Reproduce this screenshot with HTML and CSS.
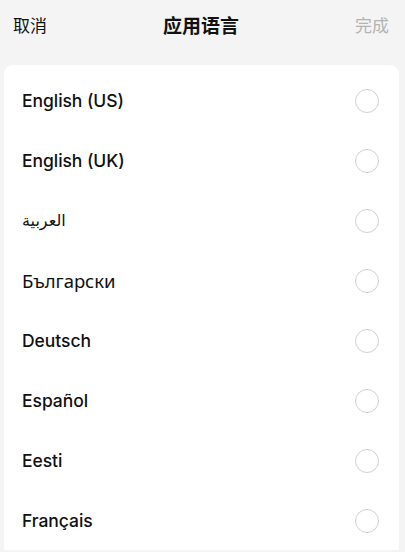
FILE: index.html
```html
<!DOCTYPE html>
<html>
<head>
<meta charset="utf-8">
<link rel="stylesheet" href="styles.css">
</head>
<body>
<div class="header">
  <span class="cancel">取消</span>
  <span class="title">应用语言</span>
  <span class="done">完成</span>
</div>
<div class="card">
  <div class="row"><span class="name">English (US)</span><span class="radio"></span></div>
  <div class="row"><span class="name">English (UK)</span><span class="radio"></span></div>
  <div class="row"><span class="name light" lang="ar">العربية</span><span class="radio"></span></div>
  <div class="row"><span class="name regular">Български</span><span class="radio"></span></div>
  <div class="row"><span class="name">Deutsch</span><span class="radio"></span></div>
  <div class="row"><span class="name">Español</span><span class="radio"></span></div>
  <div class="row"><span class="name">Eesti</span><span class="radio"></span></div>
  <div class="row"><span class="name">Français</span><span class="radio"></span></div>
</div>
</body>
</html>
```
FILE: styles.css
```css
html, body {
  margin: 0;
  padding: 0;
  background: #f4f4f4;
  height: 552px;
  overflow: hidden;
}
body {
  font-family: Inter, "Noto Sans CJK SC", sans-serif;
  color: #111;
}
.header {
  height: 48px;
  display: flex;
  align-items: center;
  justify-content: space-between;
  padding: 0 16px 0 13px;
  margin-bottom: 17px;
}
.cancel, .done {
  font-family: "Noto Sans CJK SC", sans-serif;
  font-size: 17px;
  width: 60px;
}
.done {
  color: #b3b3b3;
  text-align: right;
}
.title {
  font-family: "Noto Sans CJK SC", sans-serif;
  font-size: 19px;
  font-weight: 700;
}
.card {
  margin: 0 6px 0 4px;
  background: #fff;
  border-radius: 9px 9px 0 0;
  padding-top: 5px;
}
.row {
  height: 60px;
  display: flex;
  align-items: center;
  justify-content: space-between;
  padding: 0 20px 0 18px;
}
.name {
  font-size: 17.5px;
  font-weight: 500;
  letter-spacing: -0.05px;
}
.name.light {
  font-family: "DejaVu Sans", sans-serif;
  font-weight: 400;
  font-size: 16px;
}
.name.regular {
  font-family: "Noto Sans", sans-serif;
  font-weight: 400;
  font-size: 18.5px;
}
.radio {
  width: 22px;
  height: 22px;
  border: 1.5px solid #d0d0d0;
  border-radius: 50%;
  margin-top: 2px;
}
```
